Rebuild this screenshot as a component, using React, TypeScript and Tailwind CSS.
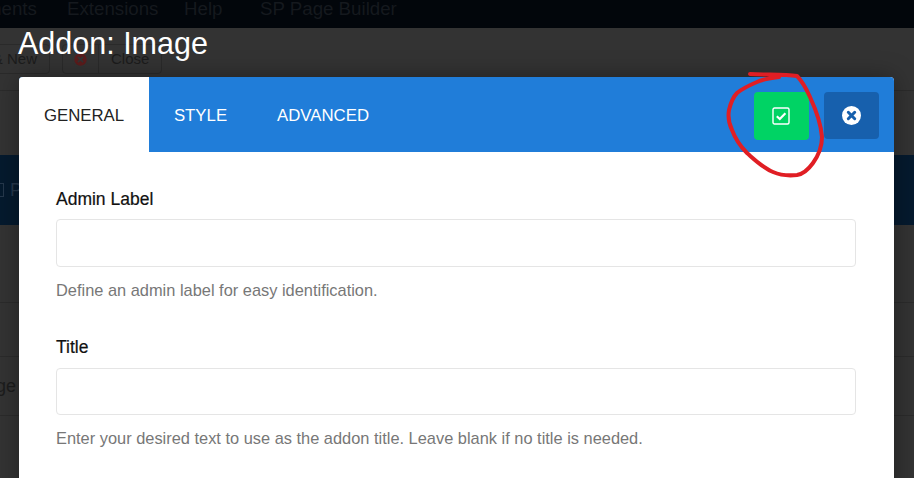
import { CircleX } from "lucide-react";

const NAV_ITEMS = [
  { label: "ments", cls: "ml-[-14px] w-[81px]" },
  { label: "Extensions", cls: "w-[117px]" },
  { label: "Help", cls: "w-[76px]" },
  { label: "SP Page Builder", cls: "" },
];

function Backdrop() {
  return (
    <div className="flex h-full w-full flex-col bg-[#333333] font-['Liberation_Sans',sans-serif]">
      {/* Top nav */}
      <div className="flex h-[28px] shrink-0 items-center overflow-hidden bg-[#02060b] pb-[10px] text-[18.7px] text-[#15191e]">
        {NAV_ITEMS.map((item) => (
          <span key={item.label} className={`shrink-0 ${item.cls}`}>
            {item.label}
          </span>
        ))}
      </div>

      {/* Toolbar */}
      <div className="flex h-[63px] shrink-0 gap-3 border-b border-[#2b2b2b] pt-[16px] text-[15px] text-[#1c1c1c]">
        <div className="ml-[-21px] flex h-[30px] w-[71px] shrink-0 items-center justify-end rounded border border-[#2a2a2a] pr-[12px]">
          &amp; New
        </div>
        <div className="flex h-[30px] w-[100px] items-center rounded border border-[#2a2a2a]">
          <span className="flex h-full w-[36px] items-center justify-center border-r border-[#2a2a2a]">
            <CircleX size={17} strokeWidth={2.5} className="fill-[#5a1c1c] text-[#333333]" />
          </span>
          <span className="ml-[12px]">Close</span>
        </div>
      </div>

      <div className="h-[64px] shrink-0" />

      {/* Blue title bar */}
      <div className="flex h-[70px] shrink-0 items-center gap-[6px] bg-[#051a2e] text-[18px] text-[#26384c]">
        <span className="ml-[-6px] h-[14px] w-[10px] border border-[#26384c]" />
        <span>Page</span>
      </div>

      <div className="h-[78px] shrink-0 border-b border-[#2b2b2b]" />
      <div className="h-[54px] shrink-0 border-b border-[#2b2b2b]" />
      <div className="flex h-[59px] shrink-0 items-center overflow-hidden border-b border-[#2b2b2b] text-[18px] text-[#1c1c1c]">
        <span className="ml-[-34px] shrink-0">Image</span>
      </div>
    </div>
  );
}

function Field({ label, help, inputCls }: { label: string; help: string; inputCls: string }) {
  return (
    <div>
      <label className="block text-[17.5px] leading-[20px] text-[#111111] [-webkit-text-stroke:0.2px_#111111]">
        {label}
      </label>
      <div className={`mb-[13px] rounded border border-[#e5e5e5] bg-white ${inputCls}`} />
      <p className="text-[16.4px] leading-[20px] text-[#777777]">{help}</p>
    </div>
  );
}

export default function App() {
  return (
    <div className="relative h-[478px] w-[914px] overflow-hidden font-['Liberation_Sans',sans-serif]">
      <Backdrop />

      <h1 className="absolute left-[18px] top-[25px] text-[30.5px] leading-[36px] text-white">Addon: Image</h1>

      {/* Modal */}
      <div className="absolute left-[19px] top-[77px] h-[420px] w-[875px] rounded-t-[4px] bg-white shadow-[0_0_24px_rgba(0,0,0,0.35)]">
        <div className="flex h-[75px] items-stretch overflow-hidden rounded-t-[4px] bg-[#207dd9] text-[16.8px]">
          <div className="flex w-[130px] items-center justify-center bg-white pt-[2px] text-[#222222]">GENERAL</div>
          <div className="flex w-[103px] items-center justify-center pt-[2px] text-white">STYLE</div>
          <div className="flex items-center pl-[25px] pt-[2px] text-white">ADVANCED</div>
          <div className="ml-auto flex items-start gap-[15px] pr-[15px] pt-[15px]">
            <button className="flex h-[48px] w-[55px] items-center justify-center rounded bg-[#00d364] text-white">
              <svg width="18" height="18" viewBox="0 0 18 18" fill="none" stroke="currentColor" className="ml-[-1px]">
                <rect x="1" y="1" width="16" height="16" rx="1.5" strokeWidth="1.4" />
                <path d="M4.8 9.2 L7.8 12 L13.4 6.2" strokeWidth="2.2" />
              </svg>
            </button>
            <button className="flex h-[47px] w-[55px] items-center justify-center rounded bg-[#1760ad]">
              <svg width="19" height="19" viewBox="0 0 19 19">
                <circle cx="9.5" cy="9.5" r="9.5" fill="#ffffff" />
                <path d="M6.3 6.3 L12.7 12.7 M12.7 6.3 L6.3 12.7" stroke="#1760ad" strokeWidth="3" strokeLinecap="round" />
              </svg>
            </button>
          </div>
        </div>

        <div className="flex flex-col gap-[37px] pl-[37px] pr-[38px] pt-[37px]">
          <Field
            label="Admin Label"
            inputCls="mt-[10px] h-[48px]"
            help="Define an admin label for easy identification."
          />
          <Field
            label="Title"
            inputCls="mt-[11px] h-[47px]"
            help="Enter your desired text to use as the addon title. Leave blank if no title is needed."
          />
        </div>
      </div>

      {/* Red hand-drawn circle */}
      <svg className="absolute left-[700px] top-[60px]" width="214" height="130" viewBox="0 0 214 130" fill="none">
        <path
          d="M50 14 C68 15 84 14 97 16 C103 22 106 28 110 37 C116 50 121 64 122 77 C122 88 118 96 113 103 C108 110 103 114 97 115 C88 116 80 115 73 112 C63 108 55 100 47 93 C40 86 35 78 32 70 C28 62 28 56 29 50 C31 42 33 37 37 33 C43 28 50 25 57 22 C63 19 71 18 79 17"
          stroke="#e01e24"
          strokeWidth="4"
          strokeLinecap="round"
          strokeLinejoin="round"
        />
      </svg>
    </div>
  );
}
